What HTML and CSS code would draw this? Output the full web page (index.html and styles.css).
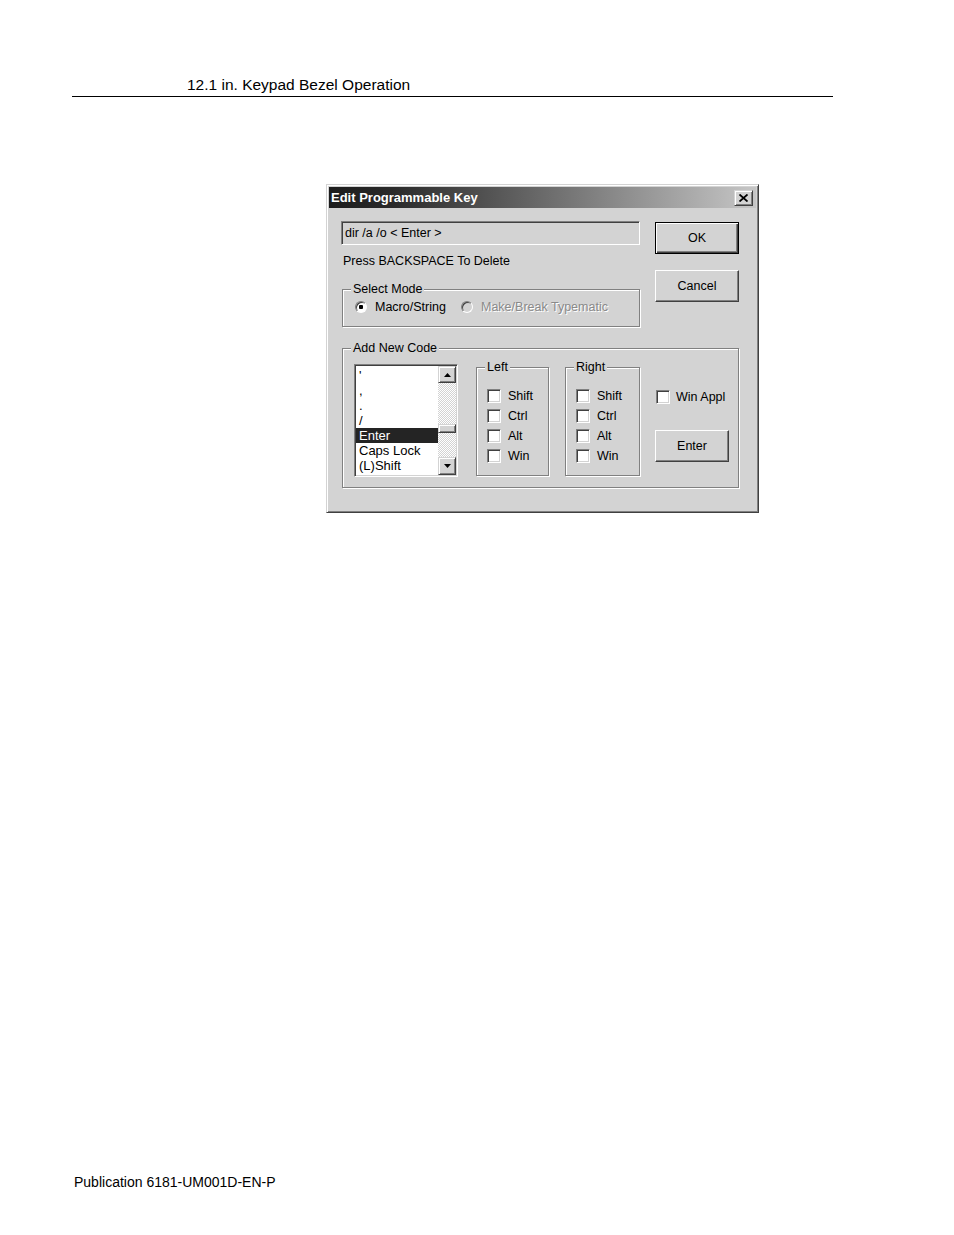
FILE: index.html
```html
<!DOCTYPE html>
<html lang="en">
<head>
    <meta charset="UTF-8">
    <meta name="viewport" content="width=device-width, initial-scale=1.0">
    <title>Edit Programmable Key</title>
    <link rel="stylesheet" href="styles.css">
</head>
<body>
<div class="page">

    <div class="running-head">12.1 in. Keypad Bezel Operation</div>

    <div class="dialog">
        <div class="titlebar">
            <span class="title">Edit Programmable Key</span>
            <span class="close-btn">
                <svg width="9" height="8" viewBox="0 0 9 8"><path d="M0.5 0.5 L8.5 7.5 M8.5 0.5 L0.5 7.5" stroke="#000" stroke-width="1.8" fill="none"/></svg>
            </span>
        </div>

        <div class="dlg-body">
            <div class="top-row">
                <div class="left-col">
                    <div class="textbox">dir /a /o &lt; Enter &gt;</div>
                    <div class="hint">Press BACKSPACE To Delete</div>
                    <div class="group mode-group">
                        <span class="group-label">Select Mode</span>
                        <div class="radio-row">
                            <span class="radio-opt first"><span class="radio checked"></span>Macro/String</span>
                            <span class="radio-opt disabled"><span class="radio"></span>Make/Break Typematic</span>
                        </div>
                    </div>
                </div>
                <div class="btn-col">
                    <div class="btn default">OK</div>
                    <div class="btn cancel">Cancel</div>
                </div>
            </div>

            <div class="group code-group">
                <span class="group-label">Add New Code</span>
                <div class="code-row">
                    <div class="listbox">
                        <div class="list-items">
                            <div class="list-item">'</div>
                            <div class="list-item">,</div>
                            <div class="list-item">.</div>
                            <div class="list-item">/</div>
                            <div class="list-item selected">Enter</div>
                            <div class="list-item">Caps Lock</div>
                            <div class="list-item">(L)Shift</div>
                            <div class="list-item">(L)Ctrl</div>
                        </div>
                        <div class="scrollbar">
                            <div class="sb-btn up">
                                <svg width="7" height="4" viewBox="0 0 7 4"><polygon points="3.5,0 7,4 0,4" fill="#000"/></svg>
                            </div>
                            <div class="sb-track"><div class="sb-thumb"></div></div>
                            <div class="sb-btn down">
                                <svg width="7" height="4" viewBox="0 0 7 4"><polygon points="0,0 7,0 3.5,4" fill="#000"/></svg>
                            </div>
                        </div>
                    </div>

                    <div class="group mod-group">
                        <span class="group-label">Left</span>
                        <div class="check-list">
                            <div class="check-row"><span class="checkbox"></span>Shift</div>
                            <div class="check-row"><span class="checkbox"></span>Ctrl</div>
                            <div class="check-row"><span class="checkbox"></span>Alt</div>
                            <div class="check-row"><span class="checkbox"></span>Win</div>
                        </div>
                    </div>

                    <div class="group mod-group right">
                        <span class="group-label">Right</span>
                        <div class="check-list">
                            <div class="check-row"><span class="checkbox"></span>Shift</div>
                            <div class="check-row"><span class="checkbox"></span>Ctrl</div>
                            <div class="check-row"><span class="checkbox"></span>Alt</div>
                            <div class="check-row"><span class="checkbox"></span>Win</div>
                        </div>
                    </div>

                    <div class="extra-col">
                        <div class="check-row"><span class="checkbox"></span>Win Appl</div>
                        <div class="btn enter">Enter</div>
                    </div>
                </div>
            </div>
        </div>
    </div>

    <div class="footer">Publication 6181-UM001D-EN-P</div>

</div>
</body>
</html>
```

FILE: styles.css
```css
body {
    margin: 0;
    background: #fff;
    font-family: "Liberation Sans", Arial, sans-serif;
    color: #000;
}

.page {
    height: 1235px;
    display: flex;
    flex-direction: column;
}

/* running header with rule underneath */
.running-head {
    width: 761px;
    margin-left: 72px;
    padding: 76px 0 2px 115px;
    box-sizing: border-box;
    font-size: 15.5px;
    line-height: 18px;
    border-bottom: 1px solid #000;
}

.footer {
    margin-top: auto;
    padding: 0 0 45px 74px;
    font-size: 14px;
    line-height: 16px;
}

/* ---- dialog window (classic 3D look, grayscale) ---- */
.dialog {
    align-self: flex-start;
    width: 433px;
    margin: 87px 0 0 326px;
    box-sizing: border-box;
    padding: 2px;
    background: #d3d3d3;
    border: 1px solid;
    border-color: #d3d3d3 #404040 #404040 #d3d3d3;
    box-shadow: inset 1px 1px #fff, inset -1px -1px #808080;
    font-size: 12.5px;
}

.titlebar {
    height: 21px;
    display: flex;
    align-items: center;
    justify-content: space-between;
    padding: 0 3px 0 2px;
    background: linear-gradient(to right, #1c1c1c, #2a2a2a 15%, #c6c6c6);
}

.title {
    color: #fff;
    font-weight: bold;
    font-size: 13px;
}

.close-btn,
.sb-btn,
.sb-thumb {
    box-sizing: border-box;
    background: #d3d3d3;
    border: 1px solid;
    border-color: #d3d3d3 #404040 #404040 #d3d3d3;
    box-shadow: inset 1px 1px #fff, inset -1px -1px #808080;
    display: flex;
    align-items: center;
    justify-content: center;
}

.close-btn {
    width: 19px;
    height: 16px;
    margin-top: 1px;
}

.dlg-body {
    padding: 13px 17px 22px 12px;
}

.top-row {
    display: flex;
    gap: 15px;
}

.left-col {
    width: 299px;
    display: flex;
    flex-direction: column;
}

/* sunken edit field */
.textbox {
    height: 24px;
    box-sizing: border-box;
    padding-left: 3px;
    line-height: 23px;
    border: 1px solid;
    border-color: #808080 #fff #fff #808080;
    box-shadow: inset 1px 1px #404040, inset -1px -1px #d3d3d3;
}

.hint {
    margin-top: 8px;
    padding-left: 2px;
    line-height: 16px;
}

/* etched group box */
.group {
    display: flex;
    flex-direction: column;
    box-sizing: border-box;
    border: 1px solid #808080;
    box-shadow: inset 1px 1px #fff, 1px 1px #fff;
}

.group-label {
    align-self: flex-start;
    margin-top: -8px;
    padding: 0 2px;
    line-height: 14px;
    background: #d3d3d3;
}

.mode-group {
    margin: 20px 0 0 1px;
    padding: 0 0 12px 12px;
}

.mode-group .group-label {
    margin-left: -4px;
}

.radio-row {
    display: flex;
    margin-top: 4px;
    line-height: 14px;
}

.radio-opt {
    display: flex;
    align-items: center;
}

.radio-opt.first {
    width: 106px;
}

.radio {
    width: 12px;
    height: 12px;
    box-sizing: border-box;
    margin-right: 8px;
    border-radius: 50%;
    border: 1px solid;
    border-color: #808080 #fff #fff #808080;
    box-shadow: inset 1px 1px #404040;
    background: #fff;
}

.radio.checked {
    background: radial-gradient(circle, #000 0 2px, #fff 2.5px);
}

.disabled {
    color: #8a8a8a;
    text-shadow: 1px 1px #fff;
}

.disabled .radio {
    background: #d3d3d3;
}

.btn-col {
    display: flex;
    flex-direction: column;
    gap: 16px;
    padding-top: 1px;
}

/* raised push button */
.btn {
    box-sizing: border-box;
    display: flex;
    align-items: center;
    justify-content: center;
    width: 84px;
    height: 32px;
    background: #d3d3d3;
    border: 1px solid;
    border-color: #fff #404040 #404040 #fff;
    box-shadow: inset -1px -1px #808080;
}

.btn.default {
    border: 1px solid #000;
    box-shadow: inset 1px 1px #fff, inset -1px -1px #404040, inset -2px -2px #808080;
}

.code-group {
    margin: 21px 0 0 1px;
    padding: 0 0 10px 11px;
}

.code-group .group-label {
    margin-left: -3px;
}

.code-row {
    display: flex;
    align-items: flex-start;
    margin-top: 9px;
}

/* list box with scrollbar */
.listbox {
    width: 104px;
    height: 113px;
    box-sizing: border-box;
    display: flex;
    background: #fff;
    border: 1px solid;
    border-color: #808080 #fff #fff #808080;
    box-shadow: inset 1px 1px #404040, inset -1px -1px #d3d3d3;
    padding: 1px;
}

.list-items {
    flex: 1;
    overflow: hidden;
    padding-top: 2px;
    font-size: 13px;
}

.list-item {
    height: 15px;
    line-height: 15px;
    padding-left: 3px;
    white-space: nowrap;
}

.list-item.selected {
    background: #242424;
    color: #fff;
}

.scrollbar {
    width: 18px;
    display: flex;
    flex-direction: column;
}

.sb-btn.up {
    height: 17px;
}

.sb-btn.down {
    height: 18px;
}

.sb-track {
    flex: 1;
    background: repeating-conic-gradient(#fff 0 25%, #d3d3d3 0 50%) 0 0 / 2px 2px;
}

.sb-thumb {
    height: 9px;
    margin-top: 41px;
}

.mod-group {
    width: 73px;
    height: 109px;
    margin: 3px 0 0 18px;
    padding-left: 10px;
}

.mod-group .group-label {
    margin-left: -2px;
}

.mod-group.right {
    width: 75px;
    margin-left: 16px;
}

.check-list {
    margin-top: 12px;
}

.check-row {
    display: flex;
    align-items: center;
    height: 20px;
}

.checkbox {
    width: 14px;
    height: 14px;
    box-sizing: border-box;
    margin-right: 7px;
    background: #fff;
    border: 1px solid;
    border-color: #808080 #fff #fff #808080;
    box-shadow: inset 1px 1px #404040, inset -1px -1px #d3d3d3;
}

.extra-col {
    margin: 23px 0 0 15px;
    padding-left: 1px;
    display: flex;
    flex-direction: column;
}

.extra-col .checkbox {
    margin-right: 6px;
}

.btn.enter {
    width: 74px;
    margin: 23px 0 0 -1px;
}
```
